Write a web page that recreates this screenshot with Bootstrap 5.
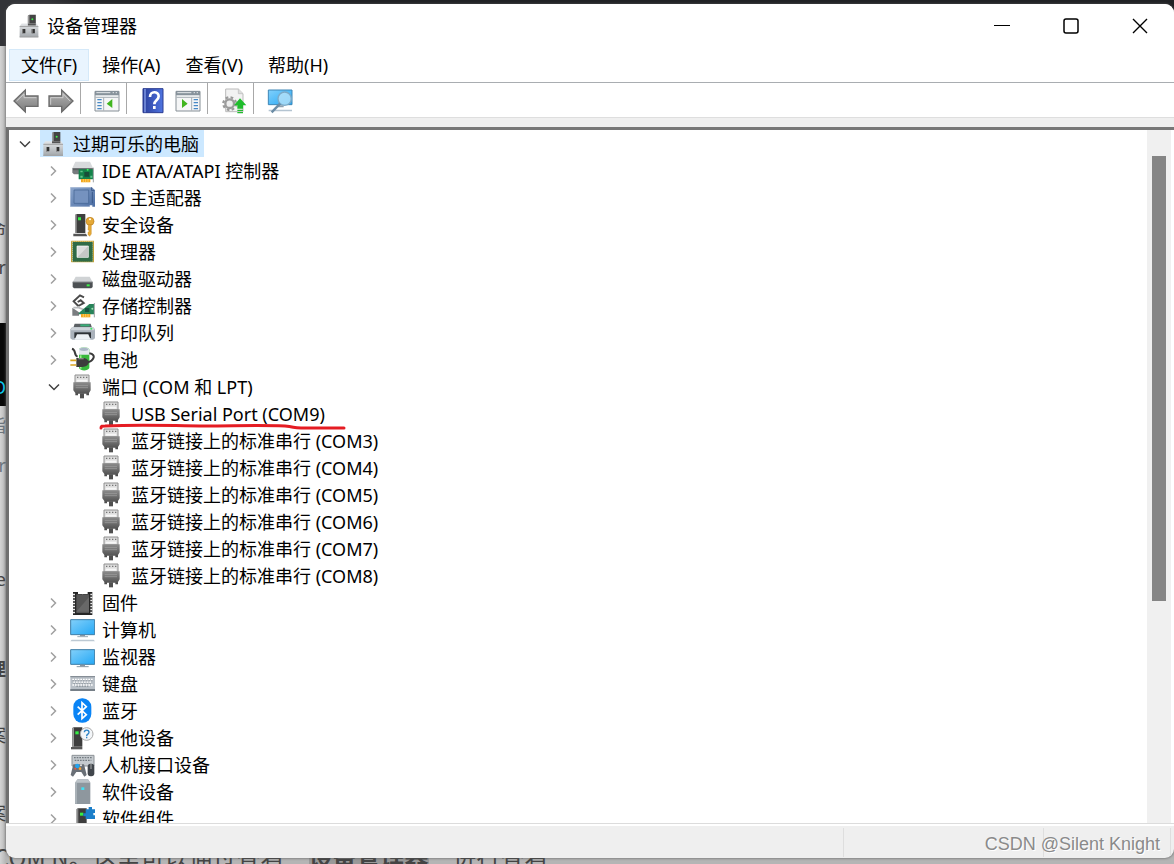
<!DOCTYPE html>
<html lang="zh-CN">
<head>
<meta charset="utf-8">
<meta name="viewport" content="width=device-width, initial-scale=1">
<title>设备管理器</title>
<link href="https://cdn.jsdelivr.net/npm/bootstrap@5.3.0/dist/css/bootstrap.min.css" rel="stylesheet">
<style>
  body { font-family: "Noto Sans", "Noto Sans CJK SC", sans-serif; font-size: 18px; line-height: 27px; color: #000; background: #c6c6c6; }
  .desk { height: 100vh; padding: 4px 0 6px 6px; }
  .backdrop-page { z-index: 0; color: #444; background: linear-gradient(90deg, #d4d4d4, #b4b4b4) left / 6px 100% no-repeat #b5b5b5; }
  .backdrop-top { height: 46px; background: linear-gradient(90deg, #333438 4%, #202124 8%); }
  .console { top: 323px; height: 83px; width: 6px; background: #080808; }
  .peek { width: 6px; direction: rtl; white-space: nowrap; }
  .peek-line { bottom: -6px; left: -6px; font-family: "Noto Sans CJK SC", sans-serif; font-size: 24px; line-height: 27px; }
  .peek-line strong { background: #999; }
  .app { z-index: 1; border-radius: 9px; background: #efefef; box-shadow: 0 0 3px #555; }
  .titlebar { height: 44px; padding-left: 13px; background: #fff; }
  .titlebar h1 { font-size: 18px; line-height: 27px; padding-left: 8px; }
  .winbtn { width: 69px; height: 44px; border: 0; background: none; }
  .menubar { height: 35px; gap: 1px; padding: 1px 3px; background: #fff; border-bottom: 1px solid #a9adb1; }
  .menubar .btn { font-size: 18px; line-height: 31px; padding: 0 11px; border-radius: 0; color: #000; }
  .menubar .btn.active { background: #e9f4fe; border-color: #d5e9f9; color: #000; }
  .toolstrip { height: 35px; padding-left: 2px; background: #fff; border-bottom: 1px solid #dedede; }
  .toolstrip button { width: 35px; height: 34px; border: 0; background: none; padding: 0; }
  .toolstrip .vr { width: 1px; height: 31px; margin: 0 8px 0 2px; opacity: 1; background: #a8a8a8; }
  .pane { margin-top: 9px; background: #fff; border: solid #6f6f6f; border-width: 3px 0 0 3px; border-top-color: #777; }
  .tree ul, .tree { list-style: none; margin: 0; padding: 0; }
  .tree ul { padding-left: 29px; }
  .node { height: 27px; }
  .toggle { width: 31px; height: 27px; border: 0; background: none; padding: 0; }
  .node svg.ico { width: 26px; height: 27px; }
  .node .caption { padding: 2px 0 0 7px; line-height: 25px; white-space: nowrap; }
  .picked { background: #cce8ff; padding-right: 5px; }
  .underscore { left: 31px; top: 22px; z-index: 2; }
  .track { width: 24px; margin-right: 3px; padding: 26px 5px 0; background: #f0f0f0; }
  .thumb { height: calc(200% / 3); background: #858585; }
  .statusbar { height: 35px; border-top: 1px solid #dcdcdc; box-shadow: inset 0 2px #fff; padding: 4px 3px 1px 0; }
  .statusbar .cell { border-right: 1px solid #dedede; }
  .cell-mid { width: 200px; } .cell-end { width: 127px; }
  .watermark { right: 14px; bottom: 6px; z-index: 3; font: 18px/27px "Liberation Sans", sans-serif; color: #8a8a8a; text-shadow: 1px 1px #fff; }
</style>
</head>
<body class="overflow-hidden">
<svg class="position-absolute" width="0" height="0" aria-hidden="true">
  <defs>
    <linearGradient id="gMetal" x2="0" y2="1"><stop stop-color="#e4e6e8"/><stop offset="1" stop-color="#a2a7ab"/></linearGradient>
    <linearGradient id="gDark" x2="0" y2="1"><stop stop-color="#8c8c8c"/><stop offset="1" stop-color="#4a4a4a"/></linearGradient>
    <linearGradient id="gSky" x2="1" y2="1"><stop stop-color="#82d0fb"/><stop offset="1" stop-color="#25a8f5"/></linearGradient>
    <linearGradient id="gSd" x2="1" y2="1"><stop stop-color="#8ba5cc"/><stop offset="1" stop-color="#4b6da3"/></linearGradient>
    <linearGradient id="gHelp" x2="1"><stop stop-color="#2b3f9c"/><stop offset="1" stop-color="#4f74e0"/></linearGradient>
    <linearGradient id="gArrow" x2="0" y2="1"><stop stop-color="#b5b5b5"/><stop offset="1" stop-color="#7b7b7b"/></linearGradient>
  </defs>
  <symbol id="host" viewBox="0 0 78 81">
    <path d="M36 9l5-3h20v34H36z" fill="#444"/><path d="M36 9l5-3v34h-5z" fill="#999"/><circle cx="50" cy="20" r="3" fill="#3ff04a"/>
    <path d="M16 34h48l5 9v34H10V43z" fill="url(#gMetal)"/><path d="M36 34h25v6H36z" fill="#555"/><path d="M10 43h59" stroke="#888" stroke-width="2"/><path d="M10 76h59" stroke="#a0a0a0" stroke-width="3"/>
    <path d="M18 51h10v13H18zM48 51h10v13H48z" fill="#333"/><path d="M18 51h3v13h-3zM48 51h3v13h-3z" fill="#888"/>
  </symbol>
  <symbol id="ide" viewBox="0 0 78 81">
    <path d="M19 14h44l9 19H10z" fill="#d8dadc"/><path d="M10 33h62v14l-5 5H15l-5-5z" fill="#777b7e"/><path d="M12 35h58v5H12z" fill="#5b5f61"/>
    <path d="M29 37h44v30H29z" fill="#14824a"/><path d="M73 32v44" stroke="#9da1a3" stroke-width="3"/><path d="M46 45h15v14H46z" fill="#184d38"/><path d="M34 41h7v5h-7zM34 56h7v6h-7zM64 56h6v6h-6z" fill="#62c48a"/><circle cx="56" cy="38" r="3" fill="#3ef25f"/>
    <path d="M36 66h28v10H36z" fill="#f2a51f"/><path d="M43 66v10M50 66v10M57 66v10" stroke="#ffe07a" stroke-width="2"/>
  </symbol>
  <symbol id="sd" viewBox="0 0 78 81">
    <path d="M4 10h64l10 8v50h-8v-4h-8v4H4z" fill="url(#gSd)"/><path d="M15 18h44v40H15z" fill="#7592bf" stroke="#41618f" stroke-width="2"/><path d="M4 11h64M4 67h56" stroke="#a9bbd6" stroke-width="2"/><path d="M68 10v10h8M70 24v34" stroke="#39588a" stroke-width="3" fill="none"/>
  </symbol>
  <symbol id="secure" viewBox="0 0 78 81">
    <path d="M18 12l5-3h26v57H18z" fill="#3e3e3e"/><path d="M18 12l5-3v57h-5z" fill="#999"/><path d="M13 68h38l4 8H13z" fill="#555"/><path d="M27 19h9v9h-9z" fill="#35ee45"/>
    <circle cx="63" cy="31" r="12" fill="#e5a937" stroke="#b97c19" stroke-width="2"/><circle cx="63" cy="25" r="3" fill="#fff"/><path d="M58 41h9v28l-5 7-5-5v-7l4-4-4-4z" fill="#e5a937" stroke="#b97c19"/>
  </symbol>
  <symbol id="cpu" viewBox="0 0 78 81">
    <path d="M6 41h70" stroke="#c3a33b" stroke-width="62" stroke-dasharray="3 3"/><path d="M41 8v67" stroke="#c3a33b" stroke-width="68" stroke-dasharray="3 3"/>
    <path d="M11 12h60v59H11z" fill="#2f6b46"/><path d="M24 24h34v34H24z" fill="#dcdedd" stroke="#fff" stroke-width="2"/><path d="M57 25v32H26z" fill="#c4c7c6"/>
  </symbol>
  <symbol id="disk" viewBox="0 0 78 81">
    <path d="M20 35h42l9 17H11z" fill="#d0d3d5"/><path d="M11 51h60v15l-4 4H15l-4-4z" fill="#4c5053"/><path d="M11 51h60" stroke="#8a8d90" stroke-width="3"/><path d="M53 58h9v6h-9z" fill="#3ff04a"/>
  </symbol>
  <symbol id="storage" viewBox="0 0 78 81">
    <path d="M45 16L33 10 14 28l14 14M28 42l16-9-9-8-9 5" fill="none" stroke="#4a4a4a" stroke-width="6"/><path d="M10 47l20 14v10H10z" fill="#7a7d80"/><path d="M13 47h16l20 8" stroke="#b9bcbe" stroke-width="5" fill="none"/>
    <path d="M29 63l32-27h14v31H29z" fill="#28845a"/><path d="M48 48h13v12H48z" fill="#185341"/><circle cx="70" cy="50" r="3" fill="#9fe5b5"/><path d="M76 33v43" stroke="#9da1a3" stroke-width="3"/><path d="M36 66h28v10H36z" fill="#f2a51f"/><path d="M43 66v10M50 66v10M57 66v10" stroke="#ffe07a" stroke-width="2"/>
  </symbol>
  <symbol id="printer" viewBox="0 0 78 81">
    <path d="M17 14h48l4 12H13z" fill="#5b6064"/><path d="M34 16h28v6H34z" fill="#38ae77"/><path d="M9 25h64l5 6v27l-6 4H10l-6-4V31z" fill="#aab2bb"/><path d="M9 25h64l4 9H5z" fill="#ced4da"/><circle cx="67" cy="29" r="3" fill="#39f05d"/>
    <path d="M16 40h50v17H16z" fill="#2d3135"/><path d="M24 46h34l7 16H17z" fill="#edf1f5"/>
  </symbol>
  <symbol id="battery" viewBox="0 0 78 81">
    <path d="M30 10c3-8 27-8 31 0v56c-4 10-27 10-31 0z" fill="#37b83c"/><path d="M30 10c3-8 27-8 31 0v16H30z" fill="#e2e7ee"/><ellipse cx="45" cy="10" rx="13" ry="5" fill="#a9b7c6"/><path d="M35 28v40" stroke="#9cf08d" stroke-width="5"/>
    <path d="M9 8c14 4 4 20 17 24M61 22c24 4 11 24-5 27" fill="none" stroke="#3a3a3a" stroke-width="6"/><path d="M22 36h18c12 0 19 6 19 13S52 63 40 63H22z" fill="#3c3c3c"/><path d="M28 38h16" stroke="#888" stroke-width="4"/><path d="M4 43h18M4 57h18" stroke="#d9a520" stroke-width="5"/>
  </symbol>
  <symbol id="plug" viewBox="0 0 78 81">
    <path d="M18 6h42v24H18z" fill="#dedede" stroke="#909090" stroke-width="3"/><path d="M24 11h4v4h-4zM33 11h4v4h-4zM42 11h4v4h-4zM51 11h4v4h-4z" fill="#777"/><path d="M23 20h32v6H23z" fill="#f7f7f7"/>
    <path d="M13 28h52v24l-5 8v7h-8v-5H27v5h-8v-7l-6-8z" fill="url(#gDark)"/><path d="M20 38h37M20 44h37" stroke="#a5a5a5" stroke-width="2"/><path d="M33 61h12v15H33z" fill="#505050"/>
  </symbol>
  <symbol id="chip" viewBox="0 0 78 81">
    <path d="M12 9h15v6h29V9h14v69H12z" fill="#262626"/><path d="M15 14v60M67 14v60" stroke="#eee" stroke-width="6" stroke-dasharray="5 4"/><path d="M22 16h38v56H22z" fill="#565656"/><path d="M22 68l38-44v44z" fill="#686868"/><path d="M33 9q8 14 16 0" fill="#fff"/>
  </symbol>
  <symbol id="pc" viewBox="0 0 78 81">
    <path d="M5 11h72v45H5z" fill="url(#gSky)" stroke="#3e7da6" stroke-width="3"/><path d="M33 57h15v4H33z" fill="#8796a2"/><path d="M25 62h32" stroke="#9ba9b4" stroke-width="3"/><path d="M8 71h66l4 5H4z" fill="#bdc9d3"/>
  </symbol>
  <symbol id="monitor" viewBox="0 0 78 81">
    <path d="M5 20h72v44H5z" fill="url(#gSky)" stroke="#3e7da6" stroke-width="3"/><path d="M33 65h15v5H33z" fill="#8796a2"/><path d="M23 71h36" stroke="#8796a2" stroke-width="3"/>
  </symbol>
  <symbol id="keyboard" viewBox="0 0 78 81">
    <path d="M4 19h74v44H4z" fill="#b8bfc6"/><path d="M4 20h74" stroke="#78828a" stroke-width="3"/><path d="M4 60h74" stroke="#767f87" stroke-width="6"/><path d="M10 29h62M13 37h56M10 45h62" stroke="#fff" stroke-width="5" stroke-dasharray="5 3"/><path d="M10 32h62M13 40h56M22 49h36" stroke="#737c84" stroke-width="2" stroke-dasharray="5 3"/>
  </symbol>
  <symbol id="bluetooth" viewBox="0 0 78 81">
    <rect x="13" y="4" width="54" height="73" rx="26" fill="#0a84f5"/><path d="M26 29l26 24-13 12V17l13 12-26 24" fill="none" stroke="#fff" stroke-width="5"/>
  </symbol>
  <symbol id="unknown" viewBox="0 0 78 81">
    <path d="M10 12l5-2h25v58H10z" fill="#3d3d3d"/><path d="M10 12l5-2v58h-5z" fill="#999"/><path d="M6 69h34v7H6z" fill="#555"/><path d="M19 22h10v9H19z" fill="#35ee45"/><circle cx="53" cy="30" r="19" fill="#f3f6f9" stroke="#aaa" stroke-width="3"/>
    <path d="M46 25c0-9 14-9 14 0 0 6-7 5-7 11M53 38v5" fill="none" stroke="#2d83c6" stroke-width="4"/>
  </symbol>
  <symbol id="hid" viewBox="0 0 78 81">
    <path d="M9 13h66v32H9z" fill="#c5cace" stroke="#8c9297" stroke-width="3"/><path d="M15 20h54M17 28h50" stroke="#737b81" stroke-width="4" stroke-dasharray="5 3"/>
    <path d="M13 40h32l8 32-7 5-9-14H22l-10 14-7-5z" fill="#6a7077"/><circle cx="25" cy="45" r="7" fill="#23a3ef"/><circle cx="33" cy="53" r="4" fill="#f1a33a"/><circle cx="19" cy="53" r="3" fill="#e75644"/><circle cx="36" cy="43" r="3" fill="#e5e5e5"/>
    <rect x="56" y="38" width="20" height="38" rx="9" fill="#41464c"/><path d="M66 38v16" stroke="#aaa" stroke-width="3"/>
  </symbol>
  <symbol id="softdev" viewBox="0 0 78 81">
    <path d="M18 14l8-10h31l7 10v64H18z" fill="#8e979e"/><path d="M18 14l8-10h31l7 10z" fill="#bcc3c8"/><path d="M18 15h6v62h-6z" fill="#a9b1b7"/><path d="M37 28h9v8h-9z" fill="#41e1f5"/>
  </symbol>
  <symbol id="softcomp" viewBox="0 0 78 81">
    <path d="M23 12l5-2h25v66H23z" fill="#3d3d3d"/><path d="M23 12l5-2v66h-5z" fill="#888"/><path d="M33 23h10v9H33z" fill="#35ee45"/><path d="M50 13h9V6h10v7h9v11h-5v7h5v11H50v-8h-7v-9h7z" fill="#1b7ec9"/>
  </symbol>
  <symbol id="open" viewBox="0 0 12 12"><path d="M1 3.500l5 5 5-5" fill="none" stroke="#404040" stroke-width="1.500"/></symbol>
  <symbol id="shut" viewBox="0 0 12 12"><path d="M3 1.500l4.500 4.500L3 10.500" fill="none" stroke="#a0a0a0" stroke-width="1.500"/></symbol>
  <symbol id="panelIco" viewBox="0 0 78 78"><path d="M3 10h72v59H3z" fill="#f5f6f7" stroke="#868f96" stroke-width="3"/><path d="M3 9h72v13H3z" fill="#87929b"/><path d="M7 14h42M56 14h4M65 14h4" stroke="#e4e8eb" stroke-width="3"/><path d="M4 28h70" stroke="#a8b0b6" stroke-width="3"/></symbol>
</svg>

<div class="desk position-relative">
  <div class="backdrop-page position-absolute top-0 start-0 w-100 h-100 overflow-hidden" aria-hidden="true">
    <div class="backdrop-top"></div>
    <div class="peek position-absolute start-0 overflow-hidden" style="top:216px">命</div>
    <div class="peek position-absolute start-0 overflow-hidden" style="top:254px">r</div>
    <div class="console position-absolute start-0"></div>
    <div class="peek position-absolute start-0 overflow-hidden text-info" style="top:374px">O</div>
    <div class="peek position-absolute start-0 overflow-hidden text-secondary" style="top:412px">指</div>
    <div class="peek position-absolute start-0 overflow-hidden text-secondary" style="top:452px">r</div>
    <div class="peek position-absolute start-0 overflow-hidden" style="top:566px">e</div>
    <div class="peek position-absolute start-0 overflow-hidden fw-bold" style="top:656px">理</div>
    <div class="peek position-absolute start-0 overflow-hidden" style="top:722px">案</div>
    <div class="peek position-absolute start-0 overflow-hidden" style="top:800px">案</div>
    <div class="peek-line position-absolute text-nowrap">COM N。这里可以通过查看“<strong>设备管理器</strong>”进行查看</div>
  </div>

  <main class="app position-relative h-100 d-flex flex-column overflow-hidden">
    <header class="titlebar d-flex align-items-center flex-shrink-0">
      <svg width="20" height="24" aria-hidden="true" viewBox="8 4 63 75"><use href="#host" width="78" height="81"/></svg>
      <h1 class="mb-0 fw-normal flex-grow-1">设备管理器</h1>
      <button class="winbtn" aria-label="最小化"><svg class="d-block mx-auto" width="16" height="16"><path d="M0 7.500h16" stroke="#000"/></svg></button>
      <button class="winbtn" aria-label="最大化"><svg class="d-block mx-auto" width="16" height="16"><rect x="1" y="1" width="14" height="14" rx="2" fill="none" stroke="#000" stroke-width="1.500"/></svg></button>
      <button class="winbtn" aria-label="关闭"><svg class="d-block mx-auto" width="16" height="16"><path d="M1 1l14 14M15 1L1 15" stroke="#000" stroke-width="1.400"/></svg></button>
    </header>

    <nav class="menubar d-flex flex-shrink-0" aria-label="菜单">
      <button class="btn active">文件(F)</button>
      <button class="btn">操作(A)</button>
      <button class="btn">查看(V)</button>
      <button class="btn">帮助(H)</button>
    </nav>

    <div class="toolstrip d-flex align-items-center flex-shrink-0" role="toolbar" aria-label="工具栏">
      <button aria-label="后退"><svg width="26" height="26" viewBox="0 0 78 78"><path d="M3 39L37 6v18h38v31H37v17z" fill="url(#gArrow)" stroke="#6c6c6c" stroke-width="4"/><path d="M11 39l22-21v11h37" fill="none" stroke="#ccc" stroke-width="3"/></svg></button>
      <button aria-label="前进"><svg width="26" height="26" viewBox="0 0 78 78"><path d="M75 39L41 6v18H3v31h38v17z" fill="url(#gArrow)" stroke="#6c6c6c" stroke-width="4"/><path d="M8 50V29h37V17l21 22" fill="none" stroke="#ccc" stroke-width="3"/></svg></button>
      <div class="vr"></div>
      <button aria-label="显示/隐藏控制台树"><svg width="26" height="26" viewBox="0 0 78 78"><use href="#panelIco"/><path d="M29 28v40" stroke="#a8b0b6" stroke-width="3"/><path d="M10 35h13M10 44h13M10 53h13M10 62h13" stroke="#4789c5" stroke-width="4"/><path d="M55 33v27L38 47z" fill="#40b51f"/></svg></button>
      <div class="vr"></div>
      <button aria-label="帮助"><svg width="26" height="26" viewBox="0 0 78 78"><path d="M9 2h60v72H9z" fill="url(#gHelp)" stroke="#2b3c91" stroke-width="3"/><path d="M12 3h6v70h-6z" fill="#6a82d2"/><path d="M30 27c0-19 26-18 26-2 0 12-13 12-13 24M43 54v9" fill="none" stroke="#fff" stroke-width="8"/></svg></button>
      <button aria-label="显示/隐藏操作窗格"><svg width="26" height="26" viewBox="0 0 78 78"><use href="#panelIco"/><path d="M50 28v40" stroke="#a8b0b6" stroke-width="3"/><path d="M56 35h13M56 44h13M56 53h13M56 62h13" stroke="#4789c5" stroke-width="4"/><path d="M21 33v27l17-13z" fill="#40b51f"/></svg></button>
      <div class="vr"></div>
      <button aria-label="更新驱动程序"><svg width="26" height="26" viewBox="0 0 78 78"><path d="M14 3h38l14 14v54H14z" fill="#f2f2f2" stroke="#bbb" stroke-width="3"/><path d="M52 3v14h14" fill="#ddd" stroke="#bbb" stroke-width="2"/><circle cx="26" cy="47" r="19" fill="none" stroke="#999" stroke-width="7" stroke-dasharray="8 7"/><circle cx="26" cy="47" r="13" fill="#eee" stroke="#9c9c9c" stroke-width="7"/><path d="M57 31l19 21H66v10H49V52H39zM49 65h17v4H49zM49 72h17v4H49z" fill="#20bd2d"/></svg></button>
      <div class="vr"></div>
      <button aria-label="扫描检测硬件改动"><svg width="26" height="26" viewBox="0 0 78 78"><path d="M4 6h71v44H4z" fill="url(#gSky)" stroke="#3e86b6" stroke-width="3"/><path d="M30 52h20v6H30z" fill="#8fa1af"/><path d="M5 65h70v5H5z" fill="#b4c4d1"/><circle cx="53" cy="32" r="20" fill="#b6e2f9" fill-opacity=".8" stroke="#7caac8" stroke-width="4"/><path d="M39 47L14 73" stroke="#6b8ca5" stroke-width="7"/></svg></button>
    </div>

    <section class="pane d-flex flex-grow-1 overflow-hidden">
      <ul class="tree flex-grow-1 overflow-hidden">
        <li>
          <div class="node d-flex align-items-center"><button class="toggle" aria-label="折叠"><svg class="d-block mx-auto" width="12" height="12"><use href="#open"/></svg></button><span class="picked d-flex align-items-center"><svg class="ico"><use href="#host"/></svg><span class="caption">过期可乐的电脑</span></span></div>
          <ul>
            <li class="node d-flex align-items-center"><button class="toggle" aria-label="展开"><svg class="d-block mx-auto" width="12" height="12"><use href="#shut"/></svg></button><svg class="ico"><use href="#ide"/></svg><span class="caption">IDE ATA/ATAPI 控制器</span></li>
            <li class="node d-flex align-items-center"><button class="toggle" aria-label="展开"><svg class="d-block mx-auto" width="12" height="12"><use href="#shut"/></svg></button><svg class="ico"><use href="#sd"/></svg><span class="caption">SD 主适配器</span></li>
            <li class="node d-flex align-items-center"><button class="toggle" aria-label="展开"><svg class="d-block mx-auto" width="12" height="12"><use href="#shut"/></svg></button><svg class="ico"><use href="#secure"/></svg><span class="caption">安全设备</span></li>
            <li class="node d-flex align-items-center"><button class="toggle" aria-label="展开"><svg class="d-block mx-auto" width="12" height="12"><use href="#shut"/></svg></button><svg class="ico"><use href="#cpu"/></svg><span class="caption">处理器</span></li>
            <li class="node d-flex align-items-center"><button class="toggle" aria-label="展开"><svg class="d-block mx-auto" width="12" height="12"><use href="#shut"/></svg></button><svg class="ico"><use href="#disk"/></svg><span class="caption">磁盘驱动器</span></li>
            <li class="node d-flex align-items-center"><button class="toggle" aria-label="展开"><svg class="d-block mx-auto" width="12" height="12"><use href="#shut"/></svg></button><svg class="ico"><use href="#storage"/></svg><span class="caption">存储控制器</span></li>
            <li class="node d-flex align-items-center"><button class="toggle" aria-label="展开"><svg class="d-block mx-auto" width="12" height="12"><use href="#shut"/></svg></button><svg class="ico"><use href="#printer"/></svg><span class="caption">打印队列</span></li>
            <li class="node d-flex align-items-center"><button class="toggle" aria-label="展开"><svg class="d-block mx-auto" width="12" height="12"><use href="#shut"/></svg></button><svg class="ico"><use href="#battery"/></svg><span class="caption">电池</span></li>
            <li>
              <div class="node d-flex align-items-center"><button class="toggle" aria-label="折叠"><svg class="d-block mx-auto" width="12" height="12"><use href="#open"/></svg></button><svg class="ico"><use href="#plug"/></svg><span class="caption">端口 (COM 和 LPT)</span></div>
              <ul>
                <li class="node d-flex align-items-center position-relative"><span class="toggle"></span><svg class="ico"><use href="#plug"/></svg><span class="caption">USB Serial Port (COM9)</span>
                  <svg class="underscore position-absolute" width="250" height="10" aria-hidden="true"><path d="M3 6c0-2 1-2 4-2 40-2 70 0 100 0s50-1 80 0c10 1 8 2 16 2h43" fill="none" stroke="#e51c23" stroke-width="3" stroke-linecap="round"/></svg></li>
                <li class="node d-flex align-items-center"><span class="toggle"></span><svg class="ico"><use href="#plug"/></svg><span class="caption">蓝牙链接上的标准串行 (COM3)</span></li>
                <li class="node d-flex align-items-center"><span class="toggle"></span><svg class="ico"><use href="#plug"/></svg><span class="caption">蓝牙链接上的标准串行 (COM4)</span></li>
                <li class="node d-flex align-items-center"><span class="toggle"></span><svg class="ico"><use href="#plug"/></svg><span class="caption">蓝牙链接上的标准串行 (COM5)</span></li>
                <li class="node d-flex align-items-center"><span class="toggle"></span><svg class="ico"><use href="#plug"/></svg><span class="caption">蓝牙链接上的标准串行 (COM6)</span></li>
                <li class="node d-flex align-items-center"><span class="toggle"></span><svg class="ico"><use href="#plug"/></svg><span class="caption">蓝牙链接上的标准串行 (COM7)</span></li>
                <li class="node d-flex align-items-center"><span class="toggle"></span><svg class="ico"><use href="#plug"/></svg><span class="caption">蓝牙链接上的标准串行 (COM8)</span></li>
              </ul>
            </li>
            <li class="node d-flex align-items-center"><button class="toggle" aria-label="展开"><svg class="d-block mx-auto" width="12" height="12"><use href="#shut"/></svg></button><svg class="ico"><use href="#chip"/></svg><span class="caption">固件</span></li>
            <li class="node d-flex align-items-center"><button class="toggle" aria-label="展开"><svg class="d-block mx-auto" width="12" height="12"><use href="#shut"/></svg></button><svg class="ico"><use href="#pc"/></svg><span class="caption">计算机</span></li>
            <li class="node d-flex align-items-center"><button class="toggle" aria-label="展开"><svg class="d-block mx-auto" width="12" height="12"><use href="#shut"/></svg></button><svg class="ico"><use href="#monitor"/></svg><span class="caption">监视器</span></li>
            <li class="node d-flex align-items-center"><button class="toggle" aria-label="展开"><svg class="d-block mx-auto" width="12" height="12"><use href="#shut"/></svg></button><svg class="ico"><use href="#keyboard"/></svg><span class="caption">键盘</span></li>
            <li class="node d-flex align-items-center"><button class="toggle" aria-label="展开"><svg class="d-block mx-auto" width="12" height="12"><use href="#shut"/></svg></button><svg class="ico"><use href="#bluetooth"/></svg><span class="caption">蓝牙</span></li>
            <li class="node d-flex align-items-center"><button class="toggle" aria-label="展开"><svg class="d-block mx-auto" width="12" height="12"><use href="#shut"/></svg></button><svg class="ico"><use href="#unknown"/></svg><span class="caption">其他设备</span></li>
            <li class="node d-flex align-items-center"><button class="toggle" aria-label="展开"><svg class="d-block mx-auto" width="12" height="12"><use href="#shut"/></svg></button><svg class="ico"><use href="#hid"/></svg><span class="caption">人机接口设备</span></li>
            <li class="node d-flex align-items-center"><button class="toggle" aria-label="展开"><svg class="d-block mx-auto" width="12" height="12"><use href="#shut"/></svg></button><svg class="ico"><use href="#softdev"/></svg><span class="caption">软件设备</span></li>
            <li class="node d-flex align-items-center"><button class="toggle" aria-label="展开"><svg class="d-block mx-auto" width="12" height="12"><use href="#shut"/></svg></button><svg class="ico"><use href="#softcomp"/></svg><span class="caption">软件组件</span></li>
          </ul>
        </li>
      </ul>
      <div class="track flex-shrink-0" role="presentation"><div class="thumb"></div></div>
    </section>

    <footer class="statusbar d-flex flex-shrink-0">
      <div class="cell flex-grow-1"></div><div class="cell cell-mid"></div><div class="cell cell-end"></div>
    </footer>
  </main>
  <div class="watermark position-absolute">CSDN @Silent Knight</div>
</div>
<script src="https://cdn.jsdelivr.net/npm/bootstrap@5.3.0/dist/js/bootstrap.bundle.min.js"></script>
</body>
</html>
